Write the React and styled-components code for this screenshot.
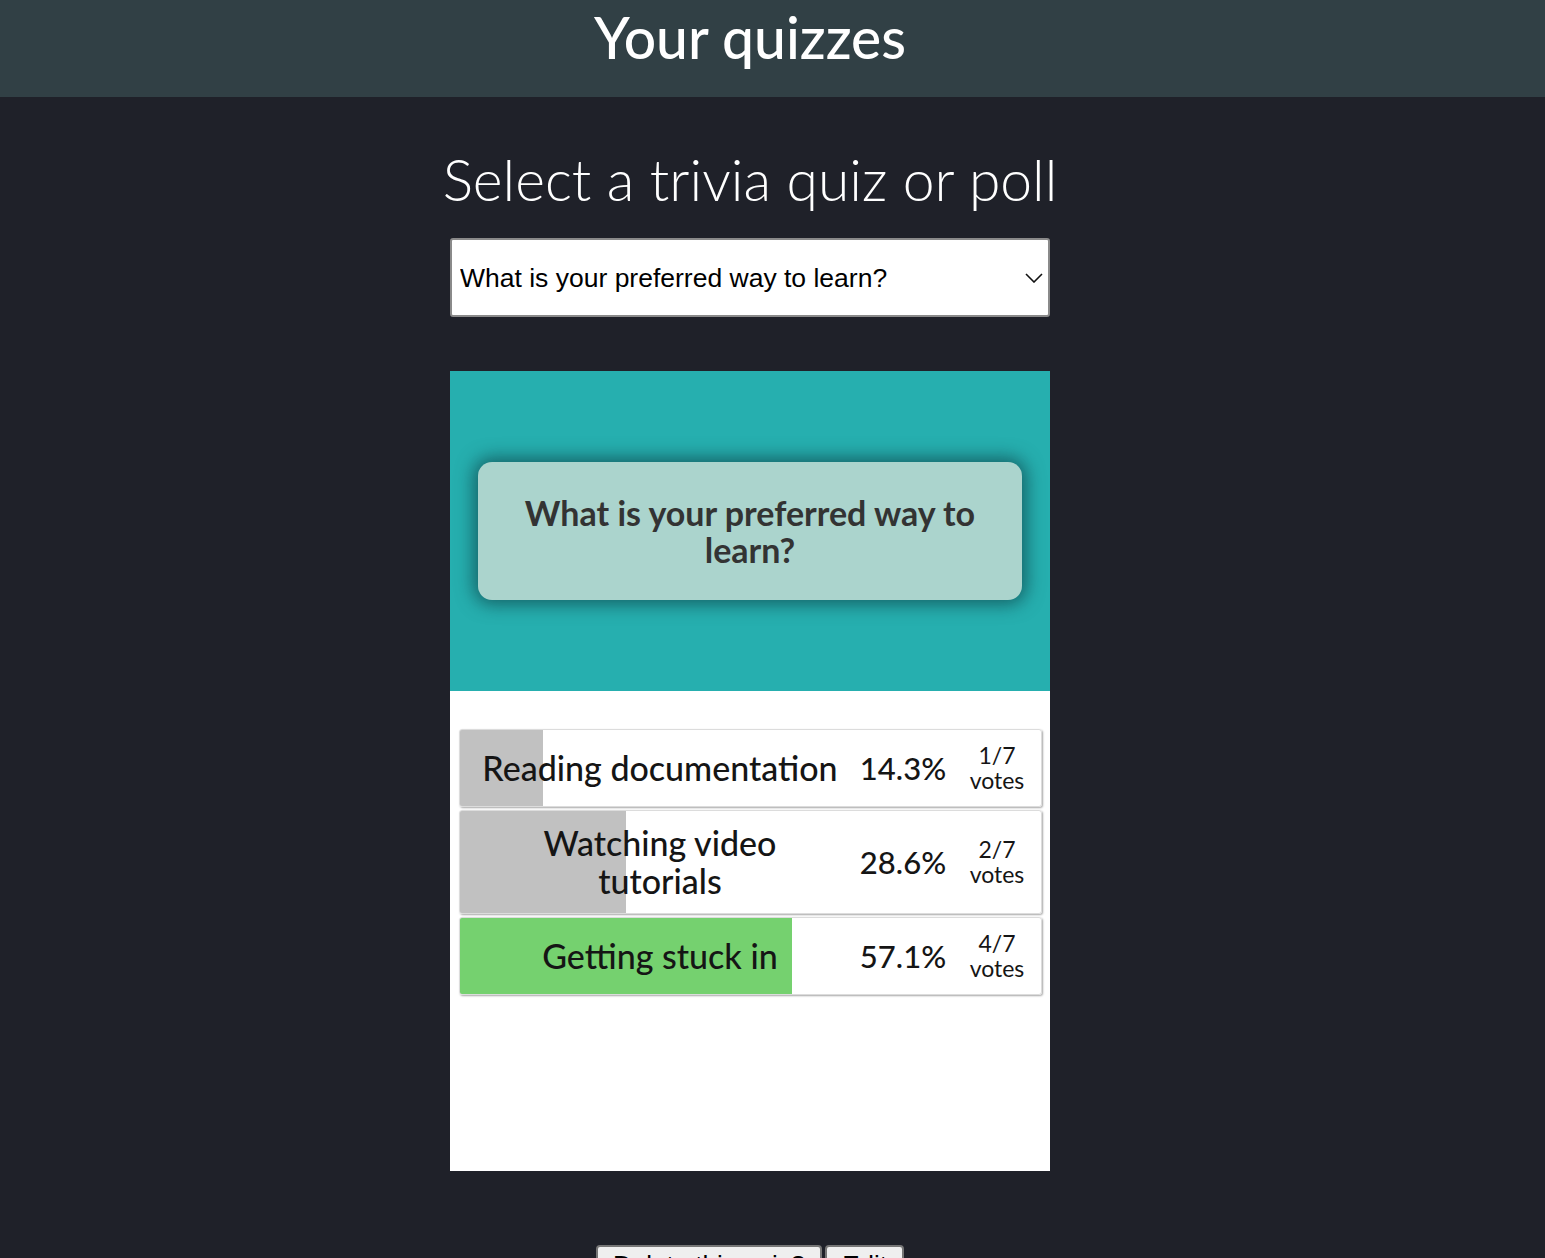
import React from "react";
import styled, { createGlobalStyle } from "styled-components";

const GlobalStyle = createGlobalStyle`
  html, body {
    margin: 0;
    padding: 0;
    background: #1f2129;
    font-family: Lato, "Open Sans", sans-serif;
  }
`;

const answers = [
  { label: "Reading documentation", votes: 1, winner: false },
  { label: "Watching video tutorials", votes: 2, winner: false },
  { label: "Getting stuck in", votes: 4, winner: true },
];
const total = 7;

const App = () => {
  return (
    <>
      <GlobalStyle />
      <Header>
        <HeaderInner>
          <Title>Your quizzes</Title>
        </HeaderInner>
      </Header>
      <Main>
        <Heading>Select a trivia quiz or poll</Heading>
        <SelectWrap>
          <QuizSelect defaultValue="learn">
            <option value="learn">What is your preferred way to learn?</option>
          </QuizSelect>
          <Chevron width="18" height="10" viewBox="0 0 18 10">
            <path d="M1 1l8 8 8-8" fill="none" stroke="#111" strokeWidth="1.6" />
          </Chevron>
        </SelectWrap>
        <Card>
          <QuestionArea>
            <QuestionBox>What is your preferred way to learn?</QuestionBox>
          </QuestionArea>
          <AnswerList>
            {answers.map((a) => {
              const pct = (a.votes / total) * 100;
              return (
                <AnswerRow key={a.label} $pct={pct} $winner={a.winner}>
                  <Label>{a.label}</Label>
                  <Percent>{pct.toFixed(1)}%</Percent>
                  <Votes>
                    {a.votes}/{total}
                    <br />
                    votes
                  </Votes>
                </AnswerRow>
              );
            })}
          </AnswerList>
        </Card>
        <Actions>
          <Button>Delete this quiz?</Button>
          <Button>Edit</Button>
        </Actions>
      </Main>
    </>
  );
};

export default App;

const Header = styled.header`
  height: 97px;
  background: #314045;
`;

const HeaderInner = styled.div`
  width: 1500px;
  display: flex;
  justify-content: center;
`;

const Title = styled.h1`
  margin: 5px 0 0;
  color: #fff;
  font-size: 57px;
  font-weight: 500;
  line-height: 64px;
`;

const Main = styled.main`
  width: 1500px;
  display: flex;
  flex-direction: column;
  align-items: center;
`;

const Heading = styled.h2`
  margin: 50px 0 0;
  color: #fff;
  font-size: 57px;
  font-weight: 300;
  line-height: 64px;
  white-space: nowrap;
`;

const SelectWrap = styled.div`
  position: relative;
  width: 600px;
  margin-top: 27px;
`;

const QuizSelect = styled.select`
  appearance: none;
  width: 100%;
  height: 79px;
  padding: 0 40px 0 8px;
  border: 2px solid #8a8a8a;
  border-radius: 3px;
  background: #fff;
  color: #000;
  font-family: "Liberation Sans", Arial, sans-serif;
  font-size: 26.5px;
`;

const Chevron = styled.svg`
  position: absolute;
  right: 7px;
  top: 35px;
  pointer-events: none;
`;

const Card = styled.section`
  width: 600px;
  height: 800px;
  margin-top: 54px;
  background: #fff;
`;

const QuestionArea = styled.div`
  height: 320px;
  background: #26afaf;
  display: flex;
  align-items: center;
  padding: 0 28px;
  box-sizing: border-box;
`;

const QuestionBox = styled.div`
  flex: 1;
  height: 138px;
  display: flex;
  align-items: center;
  justify-content: center;
  padding: 0 40px;
  box-sizing: border-box;
  background: #abd4cd;
  border-radius: 14px;
  box-shadow: 0 0 18px 4px rgba(15, 70, 75, 0.75);
  color: #333;
  font-size: 34px;
  font-weight: 700;
  line-height: 37px;
  text-align: center;
`;

const AnswerList = styled.div`
  display: flex;
  flex-direction: column;
  gap: 3px;
  padding: 38px 8px 0 9px;
`;

const AnswerRow = styled.div`
  display: grid;
  grid-template-columns: 370px 116px 72px;
  align-items: center;
  padding: 13px 8px 13px 15px;
  box-sizing: border-box;
  border: 1px solid #dcdcdc;
  border-radius: 3px;
  box-shadow: 1px 1px 2px rgba(0, 0, 0, 0.35);
  color: #151515;
  background: linear-gradient(
    to right,
    ${(p) => (p.$winner ? "#75d16f" : "#c1c1c1")} ${(p) => p.$pct}%,
    #fff ${(p) => p.$pct}%
  );
`;

const Label = styled.div`
  font-size: 34px;
  font-weight: 500;
  line-height: 38px;
  text-align: center;
  padding: 0 6px;
`;

const Percent = styled.div`
  font-size: 31px;
  font-weight: 500;
  text-align: center;
`;

const Votes = styled.div`
  font-size: 23px;
  line-height: 25px;
  text-align: center;
`;

const Actions = styled.div`
  display: flex;
  gap: 3px;
  margin-top: 74px;
`;

const Button = styled.button`
  height: 40px;
  padding: 0 15px;
  background: #efefef;
  border: 2px solid #767676;
  border-radius: 4px;
  font-family: "Liberation Sans", Arial, sans-serif;
  font-size: 26px;
  color: #000;
`;
